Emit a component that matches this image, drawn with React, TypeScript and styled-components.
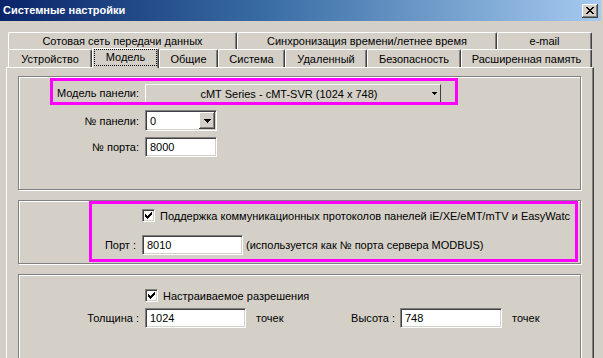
import React from "react";
import styled, { createGlobalStyle } from "styled-components";

// Global
const GlobalStyle = createGlobalStyle`
  html, body {
    margin: 0;
    padding: 0;
    background: #d4d0c8;
  }
  body {
    font-family: "Liberation Sans", Arial, sans-serif;
    font-size: 11px;
    color: #000;
  }
`;

// Window frame
const Window = styled.div`
  width: 603px;
  height: 358px;
  overflow: hidden;
  background: #d4d0c8;
  display: flex;
  flex-direction: column;
`;

const TitleBar = styled.div`
  height: 21px;
  margin-right: 2px;
  padding: 0 3px 0 3px;
  display: flex;
  align-items: center;
  justify-content: space-between;
  background: linear-gradient(to right, #0a246a 0%, #3a6ea5 45%, #a6caf0 100%);
`;

const Title = styled.span`
  color: #fff;
  font-weight: bold;
  font-size: 11px;
  line-height: 21px;
`;

const CloseButton = styled.div`
  width: 16px;
  height: 14px;
  box-sizing: border-box;
  background: #d4d0c8;
  display: flex;
  align-items: center;
  justify-content: center;
  box-shadow: inset -1px -1px #404040, inset 1px 1px #fff,
    inset -2px -2px #808080;
`;

const Body = styled.div`
  flex: 1;
  display: flex;
  flex-direction: column;
  padding: 11px 0 0 6px;
`;

// Tabs
const TabStrip = styled.div`
  margin-left: 2px;
  width: 584px;
  display: flex;
  flex-direction: column;
`;

const TabRow = styled.div<{ $h: number }>`
  height: ${(p) => p.$h}px;
  display: flex;
  align-items: flex-end;
  position: relative;
  z-index: 1;
`;

const Tab = styled.div<{ $w: number; $selected?: boolean; $h?: number }>`
  width: ${(p) => p.$w}px;
  height: ${(p) => (p.$selected ? 20 : p.$h || 18)}px;
  margin-bottom: ${(p) => (p.$selected ? -1 : 0)}px;
  box-sizing: border-box;
  background: #d4d0c8;
  border-top: 1px solid #fff;
  border-left: 1px solid #fff;
  border-right: 1px solid #404040;
  border-top-left-radius: 2px;
  border-top-right-radius: 2px;
  box-shadow: inset -1px 0 #808080;
  display: flex;
  align-items: ${(p) => (p.$selected ? "flex-start" : "center")};
  justify-content: center;
  padding: ${(p) => (p.$selected ? "0 1px 2px 1px" : "0")};
  white-space: nowrap;
  position: relative;
  z-index: ${(p) => (p.$selected ? 2 : 1)};
`;

const FocusRect = styled.span`
  flex: 1;
  align-self: stretch;
  display: flex;
  align-items: center;
  justify-content: center;
  border: 1px dotted #000;
  padding-bottom: 2px;
`;

// Tab page
const Panel = styled.div`
  flex: 1;
  width: 588px;
  box-sizing: border-box;
  border-top: 1px solid #fff;
  border-left: 1px solid #fff;
  border-right: 1px solid #404040;
  box-shadow: inset -1px 0 #808080;
  padding: 8px 0 0 11px;
  display: flex;
  flex-direction: column;
  gap: 10px;
`;

const Group = styled.div<{ $h: number }>`
  width: 563px;
  height: ${(p) => p.$h}px;
  flex-shrink: 0;
  box-sizing: border-box;
  border: 1px solid #808080;
  box-shadow: inset 1px 1px #fff, 1px 1px #fff;
  display: flex;
  flex-direction: column;
`;

const Highlight = styled.div<{ $w: number; $h: number; $left: number; $top: number }>`
  width: ${(p) => p.$w}px;
  height: ${(p) => p.$h}px;
  margin: ${(p) => p.$top}px 0 0 ${(p) => p.$left}px;
  box-sizing: border-box;
  border: 3px solid #ff00ff;
  display: flex;
  flex-direction: column;
`;

const Row = styled.div<{ $top?: number; $left?: number }>`
  display: flex;
  align-items: center;
  margin-top: ${(p) => p.$top || 0}px;
  padding-left: ${(p) => p.$left || 0}px;
  white-space: nowrap;
`;

const Label = styled.span<{ $w: number; $gap?: number }>`
  width: ${(p) => p.$w}px;
  margin-right: ${(p) => (p.$gap === undefined ? 6 : p.$gap)}px;
  text-align: right;
  flex-shrink: 0;
`;

const ModelLine = styled.div`
  flex: 1;
  display: flex;
  align-items: flex-end;
`;

const ModelLabel = styled(Label)`
  padding-bottom: 3px;
`;

const ModelField = styled.div`
  width: 296px;
  height: 18px;
  box-sizing: border-box;
  border-top: 1px solid #fff;
  border-left: 1px solid #fff;
  border-right: 1px solid #404040;
  display: flex;
  align-items: center;
  padding-right: 3px;
`;

const ModelText = styled.span`
  flex: 1;
  text-align: center;
`;

const Sunken = styled.div<{ $w: number; $h?: number }>`
  width: ${(p) => p.$w}px;
  height: ${(p) => p.$h || 20}px;
  box-sizing: border-box;
  background: #fff;
  border: 1px solid;
  border-color: #808080 #fff #fff #808080;
  box-shadow: inset 1px 1px #404040, inset -1px -1px #d4d0c8;
  display: flex;
  align-items: center;
  padding: 0 1px 0 4px;
  flex-shrink: 0;
`;

const SelectText = styled.span`
  flex: 1;
`;

const DropButton = styled.div`
  width: 16px;
  height: 17px;
  box-sizing: border-box;
  background: #d4d0c8;
  display: flex;
  align-items: center;
  justify-content: center;
  box-shadow: inset -1px -1px #404040, inset 1px 1px #fff,
    inset -2px -2px #808080;
`;

const CheckBox = styled.div`
  width: 13px;
  height: 13px;
  box-sizing: border-box;
  background: #fff;
  border: 1px solid;
  border-color: #808080 #fff #fff #808080;
  box-shadow: inset 1px 1px #404040, inset -1px -1px #d4d0c8;
  display: flex;
  align-items: center;
  justify-content: center;
  flex-shrink: 0;
`;

const CheckText = styled.span`
  margin-left: 5px;
`;

const Note = styled.span<{ $gap: number; $w?: number }>`
  margin-left: ${(p) => p.$gap}px;
  ${(p) => (p.$w ? `width: ${p.$w}px;` : "")}
  flex-shrink: 0;
`;

// Icons
const CloseIcon = () => (
  <svg width="8" height="7" viewBox="0 0 8 7" shapeRendering="crispEdges">
    <path
      d="M0 0h2v1h1v1h2v-1h1v-1h2v1h-1v1h-1v1h-1v1h1v1h1v1h1v1h-2v-1h-1v-1h-2v1h-1v1h-2v-1h1v-1h1v-1h1v-1h-1v-1h-1v-1h-1z"
      fill="#000"
    />
  </svg>
);

const DownArrow = () => (
  <svg width="7" height="4" viewBox="0 0 7 4" shapeRendering="crispEdges">
    <path d="M0 0h7v1h-1v1h-1v1h-1v1h-1v-1h-1v-1h-1v-1h-1z" fill="#000" />
  </svg>
);

const SmallArrow = () => (
  <svg width="5" height="4" viewBox="0 0 5 4" shapeRendering="crispEdges" style={{ marginBottom: 1 }}>
    <path d="M0 1h5v1h-1v1h-1v1h-1v-1h-1v-1h-1z" fill="#000" />
  </svg>
);

const CheckMark = () => (
  <svg width="7" height="7" viewBox="0 0 7 7" shapeRendering="crispEdges">
    <path d="M6 0h1v3h-1v1h-1v1h-1v1h-1v1h-1v-1h-1v-1h-1v-3h1v1h1v1h1v-1h1v-1h1v-1h1z" fill="#000" />
  </svg>
);

const rowOne = [
  { label: "Сотовая сеть передачи данных", w: 229 },
  { label: "Синхронизация времени/летнее время", w: 260 },
  { label: "e-mail", w: 95 },
];

const rowTwo = [
  { label: "Устройство", w: 84 },
  { label: "Модель", w: 67, selected: true },
  { label: "Общие", w: 59 },
  { label: "Система", w: 67 },
  { label: "Удаленный", w: 82 },
  { label: "Безопасность", w: 94 },
  { label: "Расширенная память", w: 131 },
];

const App: React.FC = () => {
  return (
    <>
      <GlobalStyle />
      <Window>
        <TitleBar>
          <Title>Системные настройки</Title>
          <CloseButton>
            <CloseIcon />
          </CloseButton>
        </TitleBar>
        <Body>
          <TabStrip>
            <TabRow $h={17}>
              {rowOne.map((t) => (
                <Tab key={t.label} $w={t.w} $h={17}>
                  {t.label}
                </Tab>
              ))}
            </TabRow>
            <TabRow $h={18}>
              {rowTwo.map((t) =>
                t.selected ? (
                  <Tab key={t.label} $w={t.w} $selected>
                    <FocusRect>{t.label}</FocusRect>
                  </Tab>
                ) : (
                  <Tab key={t.label} $w={t.w}>
                    {t.label}
                  </Tab>
                )
              )}
            </TabRow>
          </TabStrip>
          <Panel>
            <Group $h={114}>
              <Highlight $w={408} $h={27} $left={31} $top={1}>
                <ModelLine>
                  <ModelLabel $w={86}>Модель панели:</ModelLabel>
                  <ModelField>
                    <ModelText>cMT Series - cMT-SVR (1024 x 748)</ModelText>
                    <SmallArrow />
                  </ModelField>
                </ModelLine>
              </Highlight>
              <Row $top={5}>
                <Label $w={120}>№ панели:</Label>
                <Sunken $w={72} $h={21}>
                  <SelectText>0</SelectText>
                  <DropButton>
                    <DownArrow />
                  </DropButton>
                </Sunken>
              </Row>
              <Row $top={6}>
                <Label $w={120}>№ порта:</Label>
                <Sunken $w={72}>8000</Sunken>
              </Row>
            </Group>
            <Group $h={64}>
              <Highlight $w={489} $h={61} $left={70} $top={0}>
                <Row $top={5} $left={50}>
                  <CheckBox>
                    <CheckMark />
                  </CheckBox>
                  <CheckText>
                    Поддержка коммуникационных протоколов панелей iE/XE/eMT/mTV и EasyWatc
                  </CheckText>
                </Row>
                <Row $top={13}>
                  <Label $w={44}>Порт :</Label>
                  <Sunken $w={101}>8010</Sunken>
                  <Note $gap={3}>(используется как № порта сервера MODBUS)</Note>
                </Row>
              </Highlight>
            </Group>
            <Group $h={130}>
              <Row $top={14} $left={126}>
                <CheckBox>
                  <CheckMark />
                </CheckBox>
                <CheckText>Настраиваемое разрешения</CheckText>
              </Row>
              <Row $top={6}>
                <Label $w={120}>Толщина :</Label>
                <Sunken $w={101}>1024</Sunken>
                <Note $gap={10} $w={40}>
                  точек
                </Note>
                <Label $w={99} $gap={5}>
                  Высота :
                </Label>
                <Sunken $w={102}>748</Sunken>
                <Note $gap={10}>точек</Note>
              </Row>
            </Group>
          </Panel>
        </Body>
      </Window>
    </>
  );
};

export default App;
